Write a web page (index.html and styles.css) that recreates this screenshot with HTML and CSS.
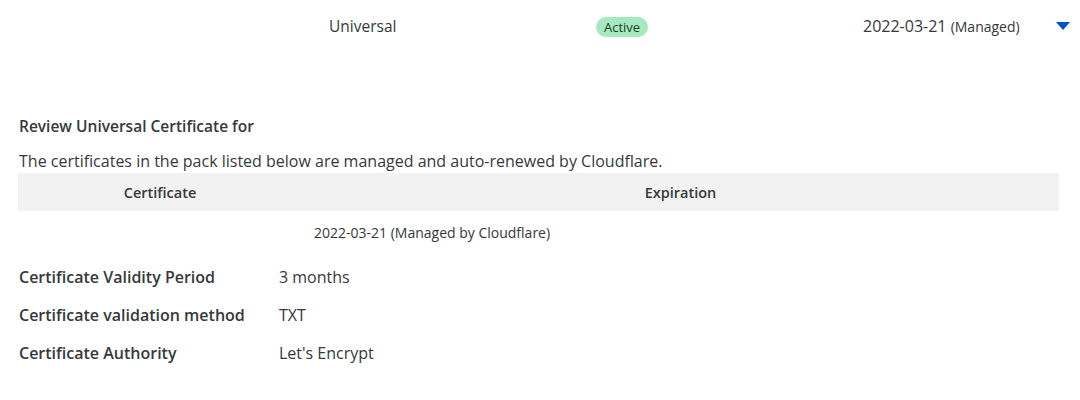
FILE: index.html
```html
<!DOCTYPE html>
<html>
<head>
<meta charset="utf-8">
<link rel="stylesheet" href="styles.css">
</head>
<body>
<div class="page">
  <div class="summary">
    <div class="cell type">Universal</div>
    <div class="cell status"><span class="badge">Active</span></div>
    <div class="cell expiry">2022-03-21 <span class="managed">(Managed)</span></div>
    <div class="cell toggle"><span class="caret"></span></div>
  </div>
  <div class="details">
    <h3 class="title">Review Universal Certificate for</h3>
    <p class="desc">The certificates in the pack listed below are managed and auto-renewed by Cloudflare.</p>
    <table class="certs">
      <thead>
        <tr><th class="col-cert">Certificate</th><th class="col-exp">Expiration</th></tr>
      </thead>
      <tbody>
        <tr><td></td><td>2022-03-21 (Managed by Cloudflare)</td></tr>
      </tbody>
    </table>
    <dl class="props">
      <div class="prop"><dt>Certificate Validity Period</dt><dd>3 months</dd></div>
      <div class="prop"><dt>Certificate validation method</dt><dd>TXT</dd></div>
      <div class="prop"><dt>Certificate Authority</dt><dd>Let's Encrypt</dd></div>
    </dl>
  </div>
</div>
</body>
</html>
```
FILE: styles.css
```css
* { box-sizing: border-box; }
html, body { margin: 0; padding: 0; background: #fff; }
body {
  font-family: "Open Sans", "Noto Sans", sans-serif;
  color: #36393a;
  font-size: 16px;
}
.page { width: 1080px; }
.summary {
  display: grid;
  grid-template-columns: 329px 267px 267px 193px 24px;
  height: 52px;
  align-items: center;
}
.summary .type { grid-column: 2; font-size: 15.5px; }
.summary .status { grid-column: 3; }
.summary .expiry { grid-column: 4; font-size: 16px; }
.summary .toggle { grid-column: 5; }
.badge {
  display: inline-block;
  background: #a6e9c0;
  color: #1e3b2a;
  font-size: 13px;
  line-height: 20px;
  padding: 0 8px;
  border-radius: 10px;
}
.managed { font-size: 14px; }
.caret {
  display: inline-block;
  width: 0; height: 0;
  border-left: 7px solid transparent;
  border-right: 7px solid transparent;
  border-top: 8px solid #0051c3;
  margin-bottom: 2px;
}
.details { padding: 62px 21px 0 18px; }
.title {
  margin: 0 0 11px 1px;
  font-size: 15.5px;
  font-weight: 600;
  line-height: 24px;
}
.desc {
  margin: 0 0 0 1px;
  font-size: 16px;
  line-height: 24px;
}
.certs {
  width: 1041px;
  border-collapse: collapse;
  font-size: 14px;
}
.certs thead tr { background: #f2f2f2; }
.certs th {
  height: 38px;
  font-size: 14.5px;
  font-weight: 600;
  text-align: center;
  padding: 0 8px;
}
.col-cert { width: 284px; }
.certs td {
  height: 42px;
  padding: 0 8px 0 12px;
  text-align: left;
}
.props { margin: 5px 0 0 1px; }
.prop {
  display: flex;
  height: 38px;
  align-items: center;
}
.prop dt {
  width: 260px;
  font-weight: 600;
  font-size: 16px;
}
.prop dd { margin: 0; font-size: 16px; }
```
